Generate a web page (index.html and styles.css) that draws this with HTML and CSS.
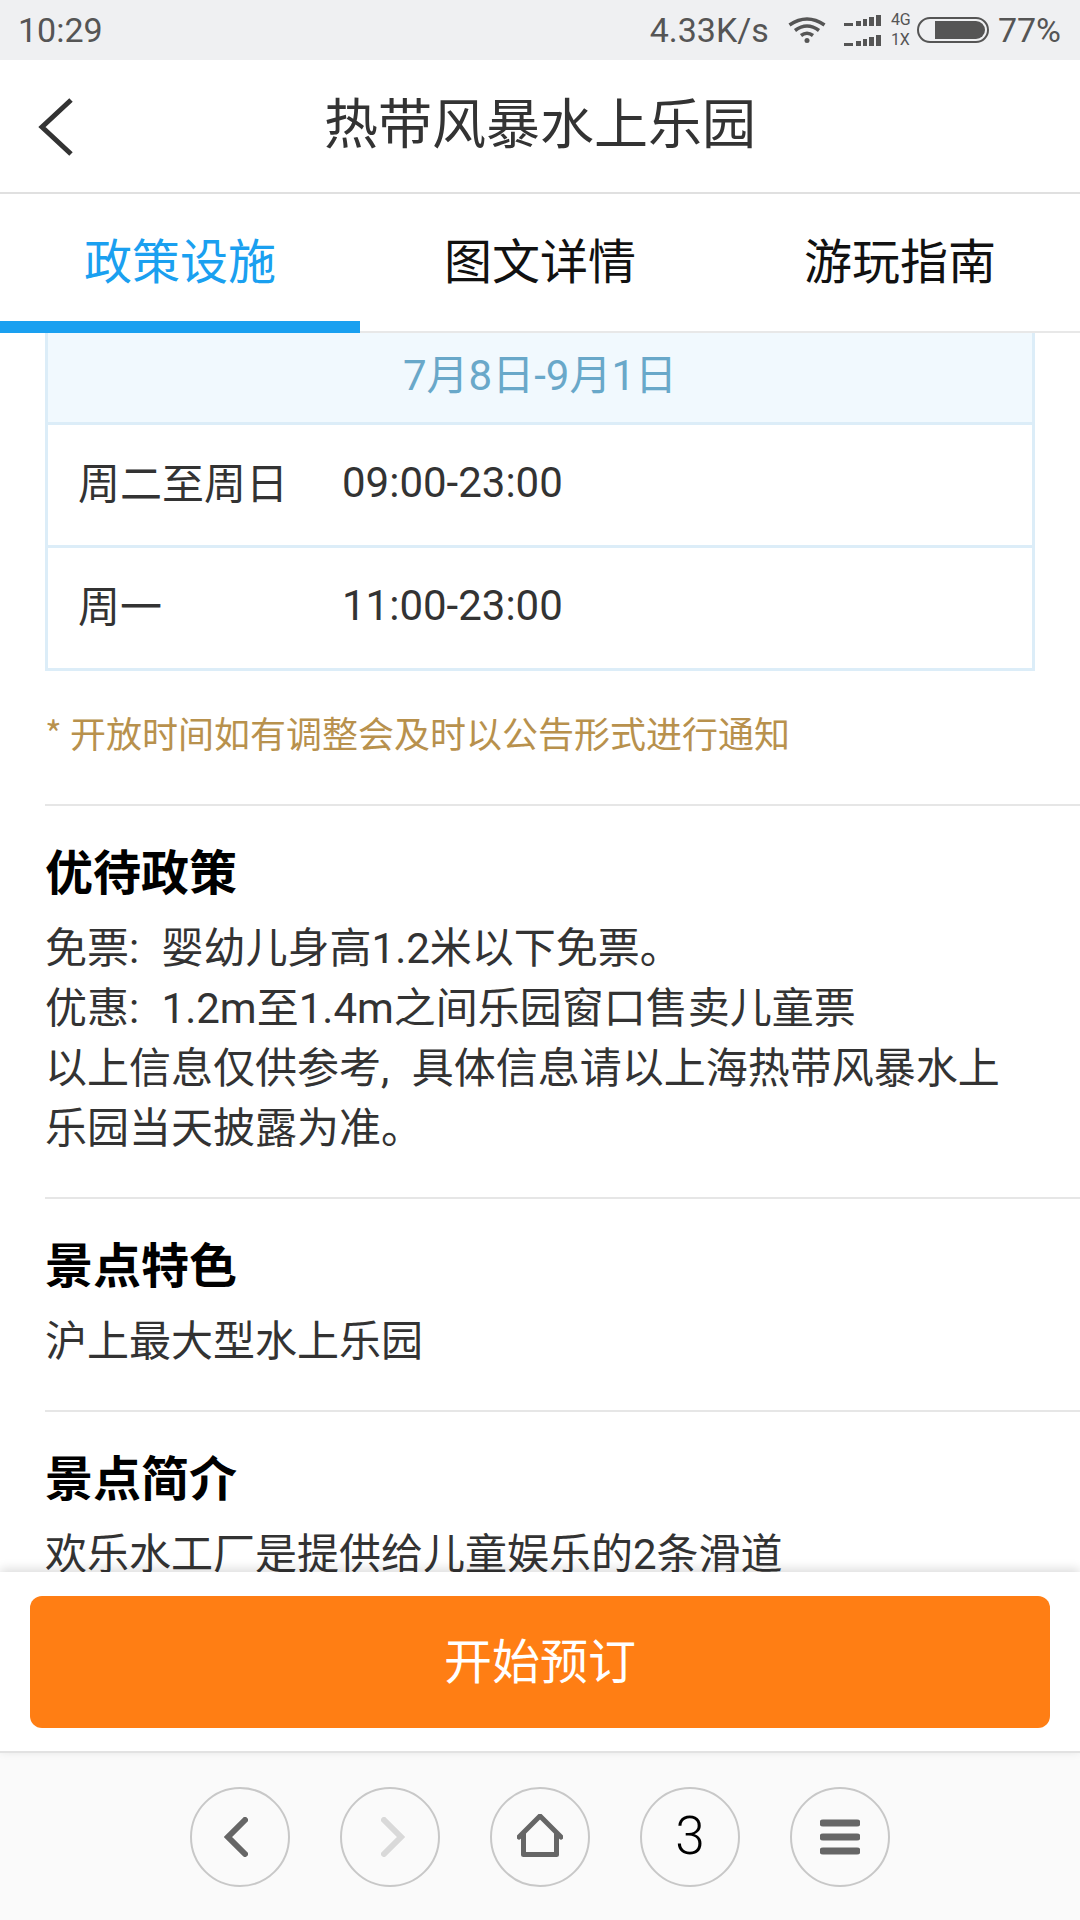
FILE: index.html
```html
<!DOCTYPE html>
<html lang="zh-CN">
<head>
    <meta charset="UTF-8">
    <meta name="viewport" content="width=device-width, initial-scale=1.0">
    <title>热带风暴水上乐园</title>
    <link rel="stylesheet" href="styles.css">
</head>
<body>
    <!-- 状态栏 -->
    <div class="statusbar">
        <span class="time">10:29</span>
        <div class="status-right">
            <span class="speed">4.33K/s</span>
            <svg class="wifi" width="38" height="26" viewBox="0 0 38 26">
                <path d="M1.5 8 Q19 -4 36.5 8" fill="none" stroke="#555" stroke-width="3.5"/>
                <path d="M7 13.5 Q19 4.5 31 13.5" fill="none" stroke="#555" stroke-width="3.5"/>
                <path d="M13 18.5 Q19 14 25 18.5" fill="none" stroke="#555" stroke-width="3.5"/>
                <circle cx="19" cy="23.5" r="2.5" fill="#555"/>
            </svg>
            <div class="signal">
                <svg width="37" height="11" viewBox="0 0 37 11"><path d="M0 8h9v3H0zM12 6h5v5h-5zM19 4h4v7h-4zM25 2h5v9h-5zM32 0h5v11h-5z" fill="#555"/></svg>
                <svg width="37" height="11" viewBox="0 0 37 11"><path d="M0 8h9v3H0zM12 6h5v5h-5zM19 4h4v7h-4zM25 2h5v9h-5zM32 0h5v11h-5z" fill="#555"/></svg>
            </div>
            <div class="net"><span>4G</span><span>1X</span></div>
            <div class="battery"><div class="battery-fill"></div></div>
            <span class="percent">77%</span>
        </div>
    </div>

    <!-- 标题栏 -->
    <header class="header">
        <svg class="back" width="40" height="60" viewBox="0 0 40 60">
            <path d="M34 3 L5 30 L34 57" fill="none" stroke="#333" stroke-width="5"/>
        </svg>
        <h1>热带风暴水上乐园</h1>
    </header>

    <!-- 标签 -->
    <nav class="tabs">
        <a class="tab active">政策设施</a>
        <a class="tab">图文详情</a>
        <a class="tab">游玩指南</a>
    </nav>

    <main class="content">
        <div class="hours">
            <div class="hours-head">7月8日-9月1日</div>
            <div class="hours-row"><span class="day">周二至周日</span><span>09:00-23:00</span></div>
            <div class="hours-row"><span class="day">周一</span><span>11:00-23:00</span></div>
        </div>
        <p class="note">* 开放时间如有调整会及时以公告形式进行通知</p>

        <section class="block">
            <h2>优待政策</h2>
            <p>免票: 婴幼儿身高1.2米以下免票。<br>优惠: 1.2m至1.4m之间乐园窗口售卖儿童票<br>以上信息仅供参考, 具体信息请以上海热带风暴水上<br>乐园当天披露为准。</p>
        </section>
        <section class="block">
            <h2>景点特色</h2>
            <p>沪上最大型水上乐园</p>
        </section>
        <section class="block">
            <h2>景点简介</h2>
            <p>欢乐水工厂是提供给儿童娱乐的2条滑道</p>
        </section>
    </main>

    <!-- 预订按钮 -->
    <div class="booking">
        <button class="book-btn">开始预订</button>
    </div>

    <!-- 浏览器工具栏 -->
    <footer class="toolbar">
        <div class="tool">
            <svg class="tool-prev" width="24" height="40" viewBox="0 0 24 40"><path d="M21 3 L4 20 L21 37" fill="none" stroke="#666" stroke-width="6" stroke-linecap="round"/></svg>
        </div>
        <div class="tool">
            <svg class="tool-next" width="24" height="40" viewBox="0 0 24 40"><path d="M3 3 L20 20 L3 37" fill="none" stroke="#d9d9d9" stroke-width="6" stroke-linecap="round"/></svg>
        </div>
        <div class="tool">
            <svg class="tool-home" width="46" height="43" viewBox="0 0 46 43"><path d="M2 23 L23 2 L44 23 M6.5 19 V40.5 H39.5 V19" fill="none" stroke="#666" stroke-width="5" stroke-linejoin="round" stroke-linecap="round"/></svg>
        </div>
        <div class="tool tool-num">3</div>
        <div class="tool">
            <svg width="40" height="36" viewBox="0 0 40 36"><path d="M3 4H37M3 18H37M3 32H37" fill="none" stroke="#666" stroke-width="7" stroke-linecap="round"/></svg>
        </div>
    </footer>
</body>
</html>
```

FILE: styles.css
```css
* {
    box-sizing: border-box;
}

html, body {
    margin: 0;
    padding: 0;
}

body {
    width: 1080px;
    height: 1920px;
    overflow: hidden;
    display: flex;
    flex-direction: column;
    background-color: #fff;
    color: #333;
    font-family: "Noto Sans CJK SC", "Noto Sans", sans-serif;
}

/* 状态栏 */
.statusbar {
    height: 60px;
    flex: none;
    display: flex;
    justify-content: space-between;
    align-items: center;
    padding: 0 19px 0 18px;
    background-color: #eff0f2;
    color: #555;
    font-family: Roboto, sans-serif;
    font-size: 34px;
}

.status-right {
    display: flex;
    align-items: center;
}

.speed {
    margin-right: 19px;
}

.signal {
    display: flex;
    flex-direction: column;
    gap: 9px;
    margin: 0 10px 0 18px;
}

.net {
    width: 20px;
    display: flex;
    flex-direction: column;
    font-size: 16px;
    line-height: 20px;
    margin-right: 6px;
}

.battery {
    width: 72px;
    height: 26px;
    border: 2px solid #555;
    border-radius: 13px;
    padding: 2px 2px 2px 16px;
    margin-right: 9px;
}

.battery-fill {
    height: 100%;
    background-color: #555;
    border-radius: 0 9px 9px 0;
}

/* 标题栏 */
.header {
    height: 134px;
    flex: none;
    position: relative;
    display: flex;
    align-items: center;
    justify-content: center;
    padding-bottom: 10px;
    border-bottom: 2px solid #e0e0e0;
}

.back {
    position: absolute;
    left: 37px;
    top: 37px;
}

.header h1 {
    margin: 0;
    font-size: 54px;
    font-weight: 400;
    color: #333;
    line-height: 1;
}

/* 标签 */
.tabs {
    height: 139px;
    flex: none;
    display: flex;
    border-bottom: 2px solid #e8e8e8;
}

.tab {
    flex: 1;
    height: 139px;
    padding-top: 29px;
    text-align: center;
    font-size: 48px;
    line-height: 70px;
    color: #111;
}

.tab.active {
    color: #1aa0f0;
    border-bottom: 12px solid #1aa0f0;
}

/* 内容 */
.content {
    flex: 1;
    min-height: 0;
    overflow: hidden;
    padding-left: 45px;
}

.hours {
    width: 990px;
    border: 3px solid #dcedf8;
    border-top: 0;
}

.hours-head {
    height: 92px;
    background-color: #f1f9fe;
    color: #69a8c9;
    font-family: Roboto, "Noto Sans CJK SC", sans-serif;
    font-size: 42px;
    line-height: 85px;
    text-align: center;
    border-bottom: 3px solid #dcedf8;
}

.hours-row {
    height: 123px;
    display: flex;
    align-items: center;
    padding: 0 0 6px 30px;
    font-family: Roboto, "Noto Sans CJK SC", sans-serif;
    font-size: 42px;
    color: #333;
    border-bottom: 3px solid #dcedf8;
}

.hours-row:last-child {
    height: 120px;
    border-bottom: 0;
}

.day {
    width: 264px;
    padding-bottom: 4px;
}

.note {
    margin: 36px 0 47px;
    font-size: 36px;
    line-height: 50px;
    color: #b8914d;
}

.block {
    border-top: 2px solid #e6e6e6;
    padding: 28px 0 38px;
}

.block h2 {
    margin: 0 0 15px;
    font-size: 48px;
    font-weight: 700;
    line-height: 70px;
    color: #000;
}

.block p {
    margin: 0;
    font-family: Roboto, "Noto Sans CJK SC", sans-serif;
    font-size: 42px;
    line-height: 60px;
    word-spacing: 12px;
    color: #333;
}

/* 预订按钮 */
.booking {
    height: 181px;
    flex: none;
    padding: 24px 30px 0;
    background-color: #fff;
    border-bottom: 2px solid #e2e2e2;
    box-shadow: 0 -3px 10px rgba(0, 0, 0, 0.14);
    position: relative;
}

.book-btn {
    display: block;
    width: 100%;
    height: 132px;
    padding: 0 0 8px;
    border: 0;
    border-radius: 12px;
    background-color: #ff7e14;
    color: #fff;
    font-family: inherit;
    font-size: 48px;
}

/* 工具栏 */
.toolbar {
    height: 167px;
    flex: none;
    display: flex;
    justify-content: center;
    gap: 50px;
    padding-top: 34px;
    background-color: #fafafa;
}

.tool {
    width: 100px;
    height: 100px;
    border: 2px solid #c8c8c8;
    border-radius: 50%;
    display: flex;
    align-items: center;
    justify-content: center;
}

.tool-prev {
    margin-right: 8px;
}

.tool-next {
    margin-left: 6px;
}

.tool-home {
    margin-bottom: 3px;
}

.tool-num {
    padding-bottom: 2px;
    font-family: Roboto, sans-serif;
    font-size: 53px;
    font-weight: 300;
    color: #000;
}
```
